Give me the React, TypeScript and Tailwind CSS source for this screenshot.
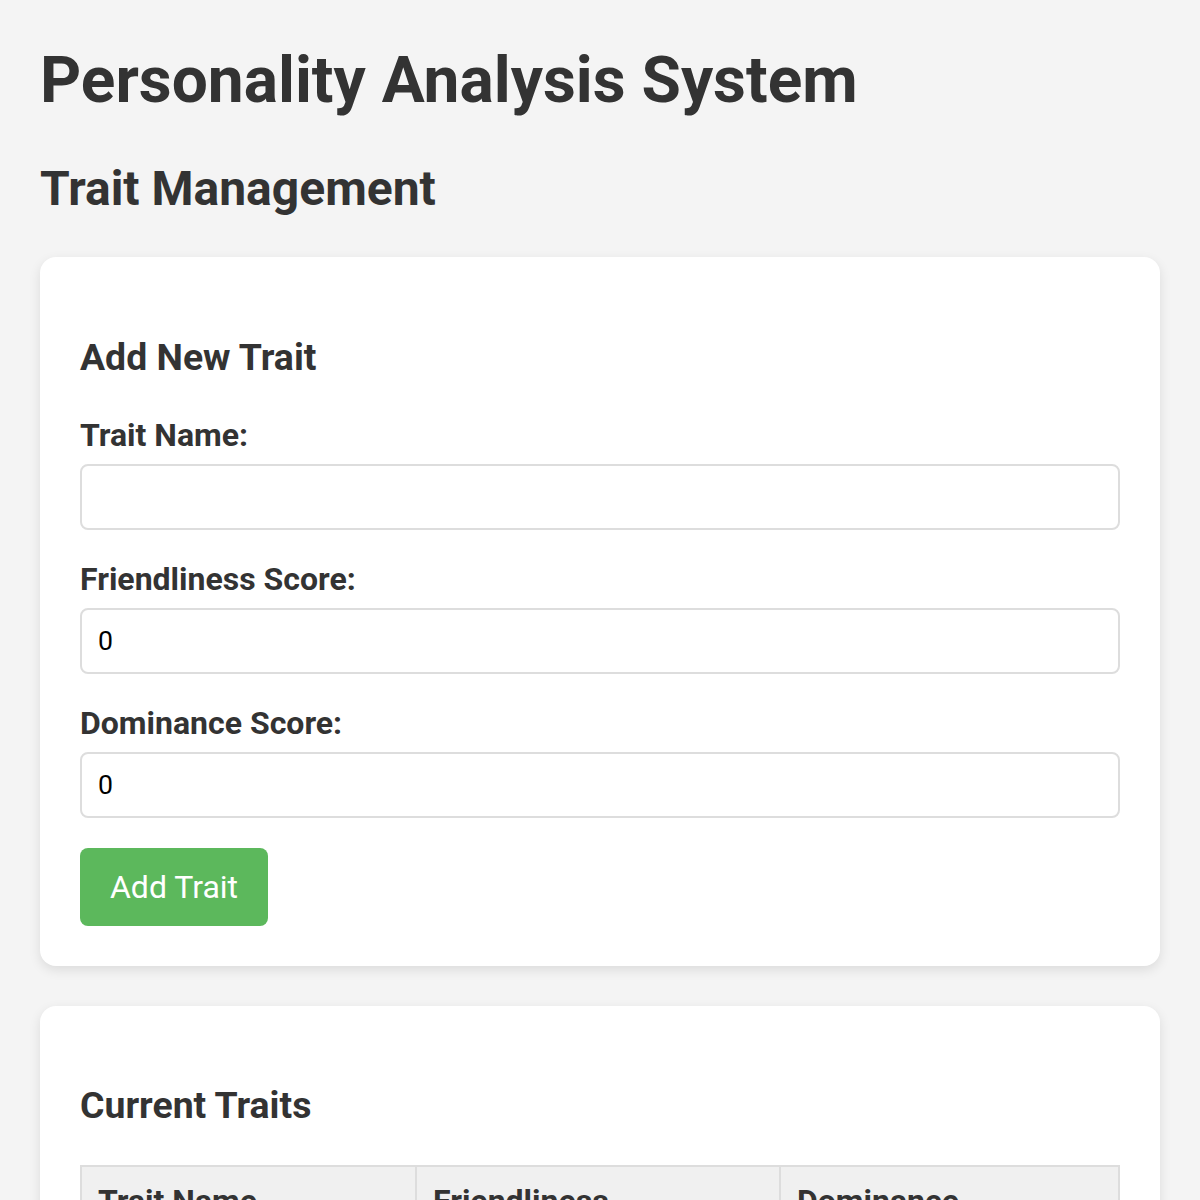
import { useState } from "react"

type Trait = { name: string; friendliness: number; dominance: number }

export default function App() {
  const [name, setName] = useState("")
  const [friendliness, setFriendliness] = useState("0")
  const [dominance, setDominance] = useState("0")
  const [traits, setTraits] = useState<Trait[]>([])

  function addTrait() {
    if (!name.trim()) return
    setTraits([...traits, { name, friendliness: Number(friendliness), dominance: Number(dominance) }])
    setName("")
    setFriendliness("0")
    setDominance("0")
  }

  const inputCls =
    "block w-full h-[66px] px-4 border-2 border-[#ddd] rounded-lg bg-white text-[26.67px] text-black outline-none font-['Roboto',sans-serif]"

  return (
    <div className="min-h-screen bg-[#f4f4f4] px-10 pb-10 text-[#333] font-['Roboto','Liberation_Sans',sans-serif] flow-root">
      <h1 className="mt-[43px] mb-[43px] text-[64px] leading-[75px] font-bold">Personality Analysis System</h1>
      <h2 className="mb-10 text-[48px] leading-[56px] font-bold">Trait Management</h2>

      <div className="bg-white rounded-2xl p-10 mb-10 shadow-[0_4px_12px_rgba(0,0,0,0.1)] flow-root">
        <h3 className="mt-[37.5px] mb-[38px] text-[37.4px] leading-[44px] font-bold">Add New Trait</h3>
        <label className="block mb-[10px] text-[32px] leading-[37.5px] font-bold">Trait Name:</label>
        <input className={`${inputCls} mb-[30.5px]`} type="text" value={name} onChange={e => setName(e.target.value)} />
        <label className="block mb-[10px] text-[32px] leading-[37.5px] font-bold">Friendliness Score:</label>
        <input className={`${inputCls} mb-[30.5px]`} type="number" value={friendliness} onChange={e => setFriendliness(e.target.value)} />
        <label className="block mb-[10px] text-[32px] leading-[37.5px] font-bold">Dominance Score:</label>
        <input className={`${inputCls} mb-[29.5px]`} type="number" value={dominance} onChange={e => setDominance(e.target.value)} />
        <button
          onClick={addTrait}
          className="block w-[188px] h-[78px] rounded-lg bg-[#5cb85c] text-white text-[32px] cursor-pointer"
        >
          Add Trait
        </button>
      </div>

      <div className="bg-white rounded-2xl p-10 mb-10 shadow-[0_4px_12px_rgba(0,0,0,0.1)] flow-root">
        <h3 className="mt-[37.5px] mb-[38px] text-[37.4px] leading-[44px] font-bold">Current Traits</h3>
        <table className="w-full border-collapse text-[32px] leading-[37.5px]">
          <thead>
            <tr className="bg-[#f0f0f0]">
              <th className="w-[335px] border-2 border-[#ddd] p-4 text-left font-bold align-top">Trait Name</th>
              <th className="w-[364px] border-2 border-[#ddd] p-4 text-left font-bold align-top">
                Friendliness
                <br />
                Score
              </th>
              <th className="border-2 border-[#ddd] p-4 text-left font-bold align-top">
                Dominance
                <br />
                Score
              </th>
            </tr>
          </thead>
          <tbody>
            {traits.map((t, i) => (
              <tr key={i}>
                <td className="border-2 border-[#ddd] p-4">{t.name}</td>
                <td className="border-2 border-[#ddd] p-4">{t.friendliness}</td>
                <td className="border-2 border-[#ddd] p-4">{t.dominance}</td>
              </tr>
            ))}
          </tbody>
        </table>
      </div>
    </div>
  )
}
